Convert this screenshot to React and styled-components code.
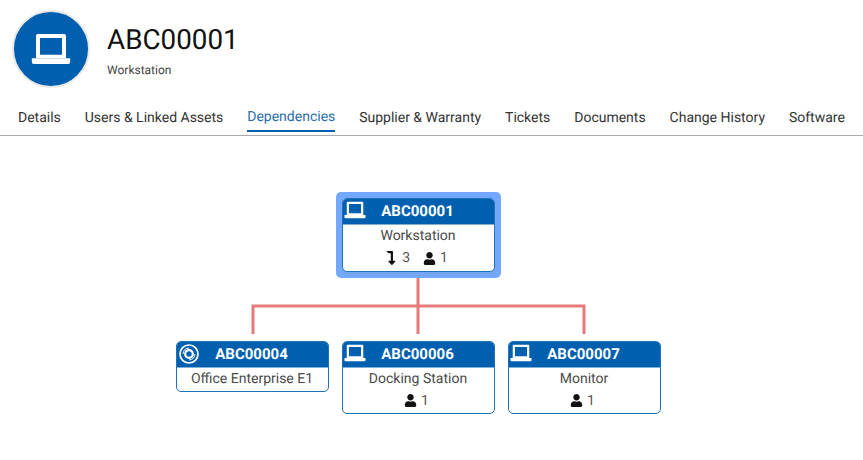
import React from "react";
import styled, { createGlobalStyle } from "styled-components";
import { FaUser, FaLevelDownAlt } from "react-icons/fa";

const Global = createGlobalStyle`
  html, body { margin: 0; padding: 0; background: #fff; }
  body { font-family: Roboto, "Liberation Sans", sans-serif; color: #444; text-rendering: geometricPrecision; }
`;

const Page = styled.div`
  width: 863px;
  height: 460px;
  overflow: hidden;
  background: #fff;
`;
const Header = styled.header`
  display: flex;
  align-items: center;
  gap: 17px;
  padding: 10px 12px 0;
  height: 78px;
`;
const Avatar = styled.div`
  width: 78px;
  height: 78px;
  box-sizing: border-box;
  border-radius: 50%;
  background: #0060af;
  border: 2px solid #e8e8e8;
  display: flex;
  align-items: center;
  justify-content: center;
  color: #fff;
  flex: none;
`;
const TitleBlock = styled.div`
  display: flex;
  flex-direction: column;
  gap: 7px;
  margin-top: 3px;
`;
const Title = styled.h1`
  margin: 0;
  font-size: 27.8px;
  font-weight: 400;
  line-height: 32px;
  color: #111;
`;
const Subtitle = styled.div`
  font-size: 12px;
  line-height: 14px;
  color: #444;
`;
const Tabs = styled.nav`
  display: flex;
  gap: 23.9px;
  margin-top: 12px;
  padding-left: 18px;
  height: 36px;
  box-sizing: border-box;
  border-bottom: 1px solid #aaa;
  white-space: nowrap;
`;
const Tab = styled.div`
  font-size: 14px;
  line-height: 16px;
  padding-top: ${p => (p.$active ? "9px" : "10px")};
  color: ${p => (p.$active ? "#2a6eaa" : "#333")};
  height: 32px;
  box-sizing: border-box;
  border-bottom: 2px solid ${p => (p.$active ? "#0060af" : "transparent")};
`;
const Diagram = styled.main`
  display: flex;
  flex-direction: column;
  align-items: center;
  padding: 56px 26px 0 0;
`;
const Focus = styled.div`
  padding: 6px;
  border-radius: 5px;
  background: #74a8ff;
  display: flex;
`;
const Connector = styled.svg`
  display: block;
  flex: none;
`;
const Row = styled.div`
  display: flex;
  align-items: flex-start;
  gap: 13px;
`;
const Node = styled.article`
  width: 153px;
  box-sizing: border-box;
  border: 1.5px solid #1f72b8;
  border-radius: 5px;
  background: #fff;
  overflow: hidden;
`;
const NodeHead = styled.div`
  height: 25px;
  background: #0060af;
  color: #fff;
  display: flex;
  align-items: center;
  border-bottom: 1px solid #7fb0d8;
`;
const IconSlot = styled.span`
  width: 22px;
  margin: ${p => (p.$disc ? "0 0 1px 1px" : "0 0 3px 1px")};
  display: flex;
  justify-content: center;
  flex: none;
`;
const NodeTitle = styled.div`
  flex: 1;
  text-align: center;
  font-size: 15px;
  font-weight: 700;
  padding-right: 25px;
  line-height: 25px;
`;
const NodeType = styled.div`
  text-align: center;
  font-size: 14px;
  line-height: 16px;
  padding: 3px 1px 4px 0;
  color: #4a4a4a;
`;
const Stats = styled.div`
  display: flex;
  justify-content: center;
  gap: 13px;
  height: ${p => (p.$focus ? "20px" : "19px")};
  margin-bottom: 3px;
  padding-right: ${p => (p.$focus ? "5px" : "4px")};
  align-items: center;
  font-size: 14px;
  color: #555;
`;
const Stat = styled.span`
  display: inline-flex;
  align-items: center;
  gap: 4px;
  svg { color: #111; }
`;

const Laptop = ({ size = 22 }) => (
  <svg width={size} height={size} viewBox="0 0 24 24" fill="currentColor" aria-hidden="true">
    <path fillRule="evenodd" d="M4 3h16a1 1 0 0 1 1 1v13.500h-18v-13.500a1 1 0 0 1 1-1zM5.400 5.400v10.100h13.200v-10.100z" />
    <path d="M0.500 17.500h23v2.300a1.200 1.200 0 0 1-1.200 1.200h-20.600a1.200 1.200 0 0 1-1.200-1.200z" />
  </svg>
);
const Disc = () => (
  <svg width="20" height="20" viewBox="0 0 20 20" fill="none" stroke="currentColor" aria-hidden="true">
    <circle cx="10" cy="10" r="9" strokeWidth="1.700" />
    <circle cx="10" cy="10" r="3.800" strokeWidth="2.200" />
    <path d="M10 4a6 6 0 0 0-6 6M16 10a6 6 0 0 1-6 6" strokeWidth="1" />
  </svg>
);

const GraphNode = ({ id, type, icon, links, users, focus }) => (
  <Node>
    <NodeHead>
      <IconSlot $disc={icon === "disc"}>{icon === "disc" ? <Disc /> : <Laptop />}</IconSlot>
      <NodeTitle>{id}</NodeTitle>
    </NodeHead>
    <NodeType>{type}</NodeType>
    {users != null && (
      <Stats $focus={focus}>
        {links != null && (
          <Stat>
            <FaLevelDownAlt size={14} />
            {links}
          </Stat>
        )}
        <Stat>
          <FaUser size={13} />
          {users}
        </Stat>
      </Stats>
    )}
  </Node>
);

const tabs = ["Details", "Users & Linked Assets", "Dependencies", "Supplier & Warranty", "Tickets", "Documents", "Change History", "Software"];

export default function App() {
  return (
    <Page>
      <Global />
      <Header>
        <Avatar><Laptop size={40} /></Avatar>
        <TitleBlock>
          <Title>ABC00001</Title>
          <Subtitle>Workstation</Subtitle>
        </TitleBlock>
      </Header>
      <Tabs>
        {tabs.map(t => <Tab key={t} $active={t === "Dependencies"}>{t}</Tab>)}
      </Tabs>
      <Diagram>
        <Focus>
          <GraphNode id="ABC00001" type="Workstation" links={3} users={1} focus />
        </Focus>
        <Connector width="341" height="63" viewBox="0 0 341 63" fill="none" stroke="#e57a7a" strokeWidth="3">
          <path d="M5 56V28H336V56M170 0V56" />
        </Connector>
        <Row>
          <GraphNode id="ABC00004" type="Office Enterprise E1" icon="disc" />
          <GraphNode id="ABC00006" type="Docking Station" users={1} />
          <GraphNode id="ABC00007" type="Monitor" users={1} />
        </Row>
      </Diagram>
    </Page>
  );
}
